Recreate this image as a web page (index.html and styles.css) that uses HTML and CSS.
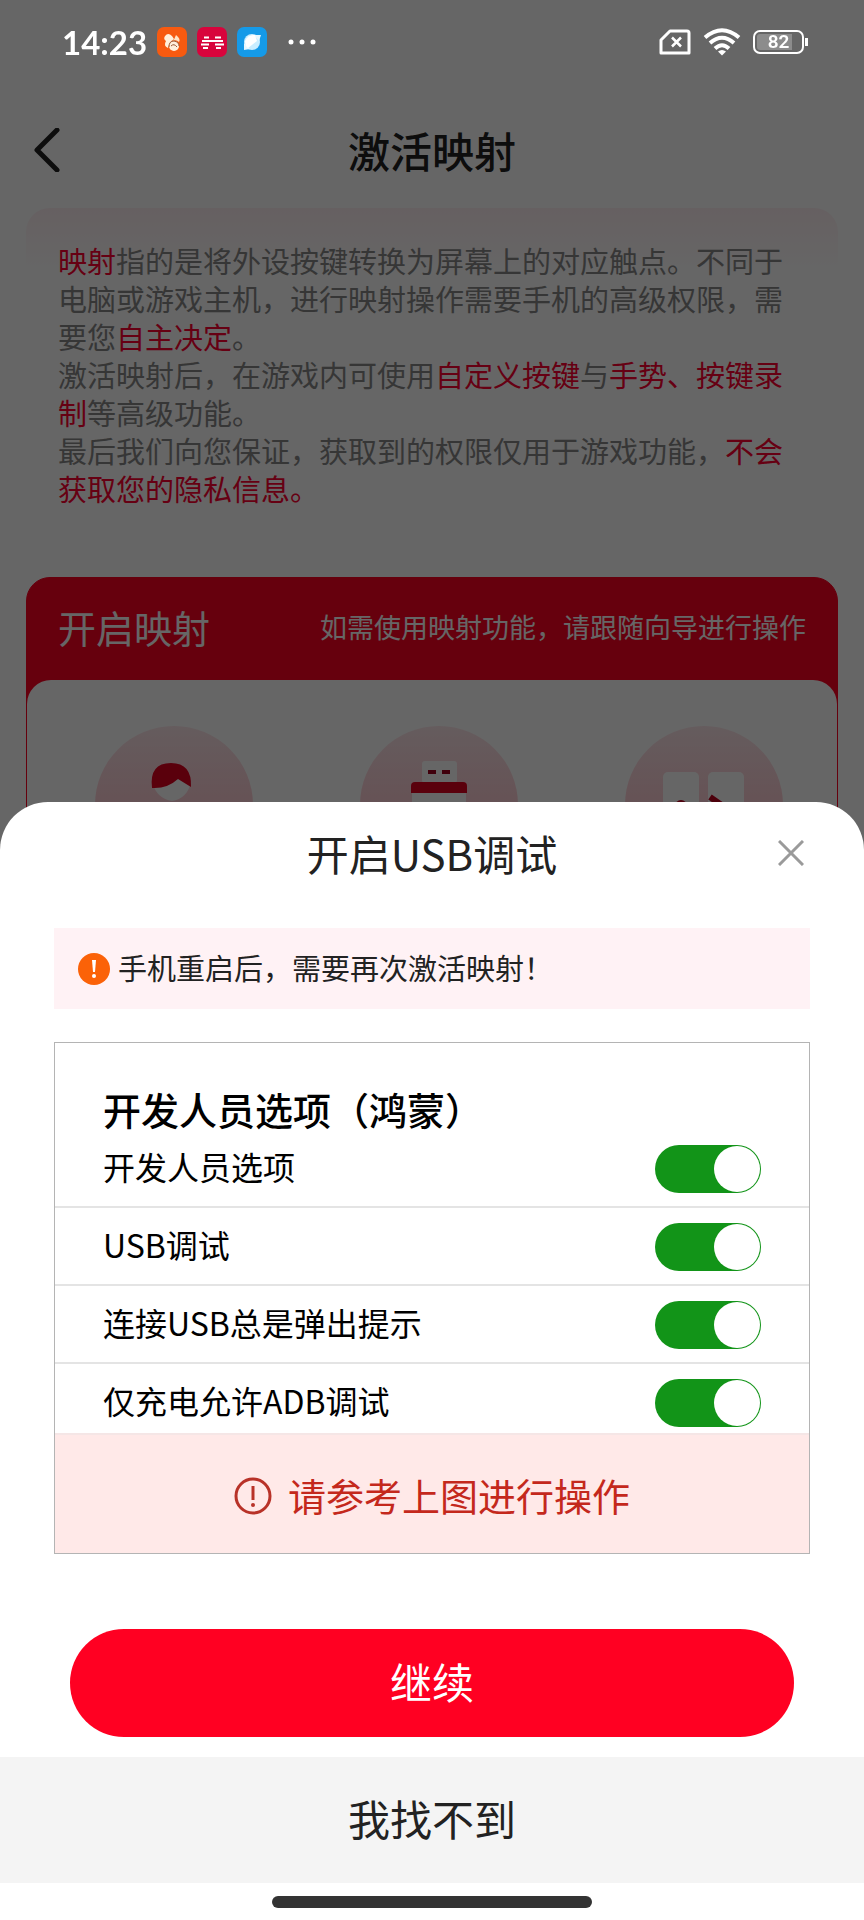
FILE: index.html
```html
<!DOCTYPE html>
<html lang="zh-CN">
<head>
  <meta charset="UTF-8">
  <title>激活映射</title>
  <meta name="viewport" content="width=device-width, initial-scale=1.0">
  <link rel="stylesheet" href="styles.css">
</head>
<body>

  <!-- status bar -->
  <div class="status-bar">
    <div class="status-left">
      <span class="clock">14:23</span>
      <svg class="app-icon" viewBox="0 0 30 30">
        <rect width="30" height="30" rx="7" fill="#f75a10"/>
        <path d="M8 9 Q11 5 15 9 L17 12 Q12 15 11 21 Q6 19 9 14 Q6 12 8 9Z" fill="#fff0dc"/>
        <path d="M19 8 Q24 12 22 15 Q19 12 15 14 Q18 12 19 8Z" fill="#ffe3c4"/>
        <circle cx="17" cy="19" r="5" fill="#fff0dc"/>
        <path d="M12 20 Q12 14 17 14 Q22 15 22 19 M14 19 Q17 16 20 20" fill="none" stroke="#9a5a38" stroke-width="1"/>
      </svg>
      <svg class="app-icon" viewBox="0 0 30 30">
        <rect width="30" height="30" rx="7" fill="#d8043c"/>
        <path d="M7 10.500H12M18 10.500H24M5 14H26M4 17.500H12M18 17.500H27M6 21H11M19 21H24" stroke="#fff" stroke-width="1.800"/>
      </svg>
      <svg class="app-icon" viewBox="0 0 30 30">
        <rect width="30" height="30" rx="7" fill="#159ae8"/>
        <circle cx="15" cy="15" r="8" fill="#c9edff"/>
        <path d="M17 8 L24 8 L22 14Z M7 16 L7 23 L13 22Z" fill="#e6f7ff"/>
        <path d="M8 14 Q11 7 18 8 L20 14 L11 21 Q8 19 8 14Z" fill="#fff"/>
      </svg>
      <svg class="more-dots" viewBox="0 0 30 8">
        <circle cx="4" cy="4" r="2.500"/><circle cx="15" cy="4" r="2.500"/><circle cx="26" cy="4" r="2.500"/>
      </svg>
    </div>
    <div class="status-right">
      <svg class="sim" viewBox="0 0 32 26">
        <path d="M2 24 V11 L11 2 H28 Q30 2 30 4 V24 Z" fill="none" stroke="#fff" stroke-width="3" stroke-linejoin="round"/>
        <path d="M13 8.500 L22 17.500 M22 8.500 L13 17.500" stroke="#fff" stroke-width="2.500"/>
      </svg>
      <svg class="wifi" viewBox="0 0 38 28">
        <g fill="none" stroke="#fff" stroke-width="4">
          <path d="M2 9.500 Q19 -5 36 9.500"/>
          <path d="M7 15 Q19 4.500 31 15"/>
          <path d="M12 20.500 Q19 14 26 20.500"/>
        </g>
        <path d="M15 23.500 Q19 20.500 23 23.500 L19 27.500Z" fill="#fff"/>
      </svg>
      <span class="battery"><span class="battery-level">82</span></span>
    </div>
  </div>

  <header class="top-bar">
    <button class="back" aria-label="返回">
      <svg viewBox="0 0 26 44"><path d="M23 2 L3 22 L23 42" fill="none" stroke="#222" stroke-width="5" stroke-linecap="round" stroke-linejoin="round"/></svg>
    </button>
    <h1>激活映射</h1>
  </header>

  <main>
    <section class="intro">
      <p><em>映射</em>指的是将外设按键转换为屏幕上的对应触点。不同于电脑或游戏主机，进行映射操作需要手机的高级权限，需要您<em>自主决定</em>。</p>
      <p>激活映射后，在游戏内可使用<em>自定义按键</em>与<em>手势、按键录制</em>等高级功能。</p>
      <p>最后我们向您保证，获取到的权限仅用于游戏功能，<em>不会获取您的隐私信息。</em></p>
    </section>

    <section class="guide">
      <div class="guide-head">
        <h2>开启映射</h2>
        <span>如需使用映射功能，请跟随向导进行操作</span>
      </div>
      <div class="guide-steps">
        <div class="step">
          <svg viewBox="0 0 158 158">
            <path d="M57 56 Q62 73 77 75 Q92 73 96 56 L82 46 Z" fill="#fff"/>
            <path d="M57 62 Q54 37 76 37 Q97 37 96 61 L83 53 Q72 63 57 62Z" fill="#e00020"/>
          </svg>
        </div>
        <div class="step">
          <svg viewBox="0 0 158 158">
            <rect x="62" y="35" width="35" height="22" rx="3" fill="#fff"/>
            <rect x="68" y="44" width="8" height="4" fill="#a00020"/><rect x="82" y="44" width="8" height="4" fill="#a00020"/>
            <rect x="52" y="66" width="54" height="50" fill="#fff"/>
            <path d="M51 67 V60 Q51 56 55 56 H103 Q107 56 107 60 V67Z" fill="#e00020"/>
          </svg>
        </div>
        <div class="step">
          <svg viewBox="0 0 158 158">
            <rect x="38" y="46" width="36" height="68" rx="5" fill="#fff"/>
            <rect x="83" y="46" width="36" height="68" rx="5" fill="#fff"/>
            <circle cx="56" cy="80" r="6" fill="#c00020"/>
            <path d="M85 71 L98 80" stroke="#c00020" stroke-width="6"/>
          </svg>
        </div>
      </div>
    </section>
  </main>

  <div class="mask"></div>

  <div class="sheet" role="dialog" aria-labelledby="sheet-title">
    <div class="sheet-head">
      <span></span>
      <h2 id="sheet-title">开启USB调试</h2>
      <button class="close" aria-label="关闭">
        <svg viewBox="0 0 26 26"><path d="M1 1 L25 25 M25 1 L1 25" stroke="#9a9a9a" stroke-width="3"/></svg>
      </button>
    </div>

    <p class="notice">
      <svg viewBox="0 0 32 32">
        <circle cx="16" cy="16" r="16" fill="#fb6208"/>
        <path d="M14 7 H18 L17 19 H15Z" fill="#fff"/><circle cx="16" cy="23" r="2" fill="#fff"/>
      </svg>
      <span>手机重启后，需要再次激活映射！</span>
    </p>

    <div class="options">
      <h3>开发人员选项（鸿蒙）</h3>
      <label class="option"><span>开发人员选项</span><input type="checkbox" checked></label>
      <label class="option"><span>USB调试</span><input type="checkbox" checked></label>
      <label class="option"><span>连接USB总是弹出提示</span><input type="checkbox" checked></label>
      <label class="option"><span>仅充电允许ADB调试</span><input type="checkbox" checked></label>
      <p class="hint">
        <svg viewBox="0 0 38 38">
          <circle cx="19" cy="19" r="17" fill="none" stroke="#b83228" stroke-width="3"/>
          <path d="M19 9 V23" stroke="#b83228" stroke-width="3"/><circle cx="19" cy="28" r="2" fill="#b83228"/>
        </svg>
        <span>请参考上图进行操作</span>
      </p>
    </div>

    <button class="continue">继续</button>
    <button class="not-found">我找不到</button>
    <div class="home-bar"></div>
  </div>

</body>
</html>
```

FILE: styles.css
```css
* {
  box-sizing: border-box;
}

body {
  margin: 0;
  min-height: 100vh;
  background: #fff;
  color: #222;
  font-family: "Noto Sans CJK SC", sans-serif;
  overflow: hidden;
}

h1, h2, h3, p {
  margin: 0;
  font-weight: 400;
}

svg {
  display: block;
  flex: none;
}

button {
  padding: 0;
  border: none;
  background: none;
  color: inherit;
  font-family: inherit;
  cursor: pointer;
}

/* status bar, stays above the mask */
.status-bar {
  position: relative;
  z-index: 3;
  display: flex;
  justify-content: space-between;
  align-items: center;
  height: 84px;
  padding: 0 56px 0 62px;
  color: #fff;
}

.status-left, .status-right {
  display: flex;
  align-items: center;
}

.status-left {
  gap: 10px;
}

.status-right {
  gap: 12px;
}

.clock {
  font-family: Lato, sans-serif;
  font-size: 33px;
  font-weight: 700;
  line-height: 40px;
}

.app-icon {
  width: 30px;
  height: 30px;
}

.more-dots {
  width: 30px;
  height: 8px;
  margin-left: 10px;
  fill: #fff;
}

.sim {
  width: 32px;
  height: 26px;
}

.wifi {
  width: 38px;
  height: 28px;
}

.battery {
  position: relative;
  width: 51px;
  height: 24px;
  margin-right: 4px;
  padding: 2px;
  border: 2px solid #fff;
  border-radius: 7px;
}

.battery::after {
  content: "";
  position: absolute;
  right: -6px;
  top: 6px;
  width: 3px;
  height: 8px;
  background: #fff;
}

.battery-level {
  display: block;
  border-radius: 3px;
  background: linear-gradient(90deg, #8c8c8c 82%, transparent 82%);
  font-family: Roboto, sans-serif;
  font-size: 19px;
  font-weight: 600;
  line-height: 16px;
  text-align: center;
}

/* page under the mask */
.top-bar {
  display: grid;
  grid-template-columns: 80px 1fr 80px;
  align-items: center;
  height: 124px;
  padding-top: 7px;
}

.top-bar h1 {
  font-size: 42px;
  font-weight: 500;
  line-height: 60px;
  text-align: center;
}

.back {
  width: 26px;
  height: 44px;
  margin-left: 34px;
}

main {
  padding: 0 26px;
}

.intro {
  min-height: 338px;
  padding: 33px 32px 0;
  border-radius: 24px;
  background: linear-gradient(#fff0f3, #fff 62px);
  color: #888;
  font-size: 29px;
  line-height: 38px;
}

.intro em {
  color: #ff0030;
  font-style: normal;
}

.guide {
  margin-top: 31px;
  border: 1px solid #ff0022;
  border-radius: 24px;
  background: #ff0022;
}

.guide-head {
  display: flex;
  justify-content: space-between;
  align-items: center;
  height: 102px;
  padding: 0 31px 6px;
  color: #fff;
}

.guide-head h2 {
  font-size: 38px;
}

.guide-head span {
  font-size: 27px;
}

.guide-steps {
  display: grid;
  grid-template-columns: repeat(3, 1fr);
  justify-items: center;
  padding: 46px 0 45px 14px;
  border-radius: 24px;
  background: #fff;
}

.step {
  width: 158px;
  height: 158px;
  border-radius: 50%;
  background: linear-gradient(#fde6ea, #ffb4c0);
}

.mask {
  position: fixed;
  inset: 0;
  z-index: 2;
  background: rgba(0, 0, 0, 0.6);
}

/* bottom sheet */
.sheet {
  position: fixed;
  left: 0;
  right: 0;
  bottom: 0;
  z-index: 4;
  border-radius: 48px 48px 0 0;
  background: #fff;
}

.sheet-head {
  display: grid;
  grid-template-columns: 86px 1fr 86px;
  align-items: center;
  height: 102px;
  margin-bottom: 24px;
}

.sheet-head h2 {
  font-size: 42px;
  line-height: 60px;
  text-align: center;
}

.close {
  width: 26px;
  height: 26px;
}

.notice {
  display: flex;
  align-items: center;
  gap: 8px;
  height: 81px;
  margin: 0 54px 33px;
  padding: 0 24px;
  background: #fff2f5;
  font-size: 29px;
}

.notice svg {
  width: 32px;
  height: 32px;
}

.notice span, .option span, .hint span {
  padding-bottom: 4px;
}

.options {
  margin: 0 54px 75px;
  border: 1px solid #b4b4b4;
  color: #000;
}

.options h3 {
  padding: 47px 48px 2px;
  font-size: 38px;
  font-weight: 500;
  line-height: 38px;
}

.option {
  display: flex;
  justify-content: space-between;
  align-items: center;
  padding: 14px 48px 13px;
  border-bottom: 2px solid #e4e4e4;
  font-size: 32px;
  line-height: 45px;
}

.option:nth-of-type(4) {
  padding-bottom: 6px;
  border-bottom-color: #f5e6e6;
}

.option input {
  appearance: none;
  display: flex;
  width: 106px;
  height: 48px;
  margin: 0;
  padding: 1px;
  border-radius: 24px;
  background: #ccc;
}

.option input::before {
  content: "";
  width: 46px;
  height: 46px;
  border-radius: 50%;
  background: #fff;
}

.option input:checked {
  justify-content: flex-end;
  background: #129418;
}

.hint {
  display: flex;
  justify-content: center;
  align-items: center;
  gap: 16px;
  height: 118px;
  padding-top: 4px;
  background: #ffe9e8;
  color: #c4281c;
  font-size: 38px;
}

.hint svg {
  width: 38px;
  height: 38px;
}

.continue {
  display: block;
  width: calc(100% - 140px);
  height: 108px;
  margin: 0 auto 20px;
  padding-bottom: 6px;
  border-radius: 54px;
  background: #ff0022;
  color: #fff;
  font-size: 42px;
}

.not-found {
  display: block;
  width: 100%;
  height: 126px;
  padding-bottom: 6px;
  background: #f4f4f4;
  font-size: 42px;
}

.home-bar {
  width: 37%;
  height: 12px;
  margin: 13px auto 12px;
  border-radius: 6px;
  background: #333;
}
```
